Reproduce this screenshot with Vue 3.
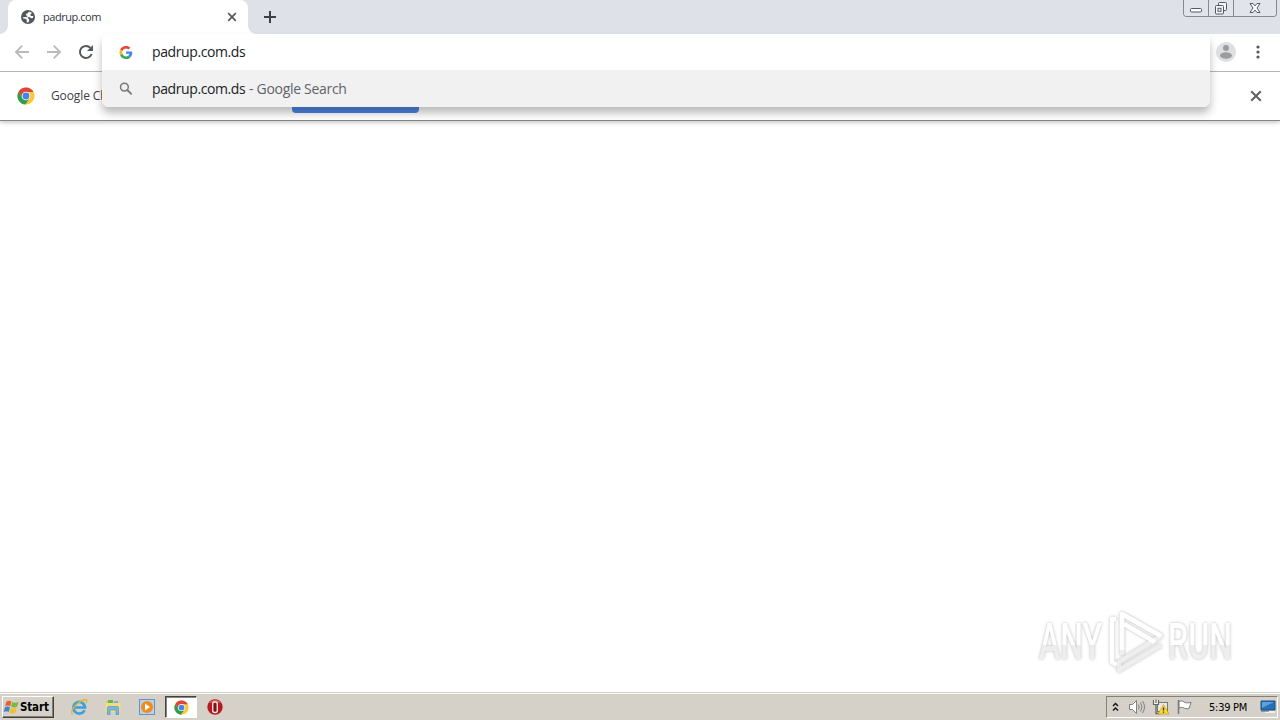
<template>
  <div class="desktop">
    <div class="browser">
      <div class="tab-strip">
        <div class="tab">
          <svg class="globe" viewBox="0 0 16 16" width="16" height="16">
            <circle cx="8" cy="8" r="7" fill="#54575b" />
            <path d="M7.600 2.700c2.300-.5 4.500.8 5.300 2.700l-2.100-.3-1.300 1.200.4 1.300-2.500.1-.9 1.100-1.900-.7-2 .2c-.3-2.800 1.600-4.800 3.700-5.400l-.2 1.300z" fill="#54575b" />
            <path d="M8.800 2.600l-.9 1.600-1.700.5-.2 1.500 1.600.7-.8 1.400-1.900-.3-2.200.4.600 1.100 2.100.2 1.400 1.100-.2 2.500 1.700.1 1-1.800-.5-1.700-1.300-.8.700-1.200 1.600.3 1.400 1.100 1.800-.4.300-2-2.100.1-1.100-1 1.200-1.500 1.100-.4z" fill="#fff" />
          </svg>
          <span class="tab-title">padrup.com</span>
          <svg class="tab-close" viewBox="0 0 10 10" width="10" height="10"><path d="M1.2 1.2l7.6 7.6M8.8 1.2L1.2 8.8" stroke="#55585c" stroke-width="1.7" /></svg>
        </div>
        <svg class="new-tab" viewBox="0 0 14 14" width="14" height="14"><path d="M7 1v12M1 7h12" stroke="#3c4043" stroke-width="2" /></svg>
        <div class="window-controls">
          <span class="wc wc-min"><svg viewBox="0 0 14 16" width="14" height="16"><rect x="1.5" y="8.5" width="11" height="3.5" rx="1" fill="#fff" stroke="#535764" /></svg></span>
          <span class="wc wc-max">
            <svg viewBox="0 0 14 16" width="14" height="16" fill="#f5f6f8" stroke="#535764">
              <rect x="4.5" y="2.5" width="8" height="8" rx="1" /><rect x="1.5" y="5.5" width="8" height="8.5" rx="1" /><rect x="4" y="8.3" width="3" height="3" />
            </svg>
          </span>
          <span class="wc wc-close">
            <svg viewBox="0 0 14 16" width="14" height="16"><path d="M2 3.5h3l2 2.4 2-2.4h3L9 8l3 4.5H9l-2-2.4-2 2.4H2L5 8z" fill="#fff" stroke="#535764" stroke-linejoin="round" /></svg>
          </span>
        </div>
      </div>

      <div class="toolbar">
        <svg class="nav" viewBox="0 0 16 16" width="16" height="16"><path d="M15 8H2M8.3 1.6L1.9 8l6.4 6.4" fill="none" stroke="#b9babc" stroke-width="1.8" /></svg>
        <svg class="nav" viewBox="0 0 16 16" width="16" height="16"><path d="M1 8h13M7.7 1.6L14.1 8l-6.4 6.4" fill="none" stroke="#b9babc" stroke-width="1.8" /></svg>
        <svg class="nav" viewBox="0 0 16 16" width="16" height="16"><path d="M13.6 10A6 6 0 1 1 12.4 3.9" fill="none" stroke="#55585c" stroke-width="2" /><path d="M15 1v6H9z" fill="#55585c" /></svg>
        <svg class="avatar" viewBox="0 0 20 20" width="20" height="20">
          <circle cx="10" cy="10" r="10" fill="#dedfe1" /><circle cx="10" cy="5.9" r="3" fill="#9a9ca0" /><ellipse cx="10" cy="13.5" rx="6" ry="3.2" fill="#9a9ca0" />
        </svg>
        <svg class="menu-dots" viewBox="0 0 4 16" width="4" height="16" fill="#55585c"><circle cx="2" cy="3" r="1.6" /><circle cx="2" cy="8" r="1.6" /><circle cx="2" cy="13" r="1.6" /></svg>
      </div>

      <div class="infobar">
        <svg viewBox="0 0 20 20" width="18" height="18"><use href="#chrome-logo" /></svg>
        <span class="info-text">Google Ch</span>
        <span class="info-button"></span>
        <svg class="info-close" viewBox="0 0 10 10" width="12" height="12"><path d="M1 1l8 8M9 1L1 9" stroke="#616468" stroke-width="1.7" /></svg>
      </div>

      <!-- address bar with suggestions -->
      <div class="omnibox">
        <div class="omni-row">
          <svg viewBox="0 0 48 48" width="13" height="13">
            <path fill="#ea4335" d="M24 9.5c3.5 0 6.7 1.2 9.2 3.6l6.9-6.9C35.9 2.4 30.5 0 24 0 14.6 0 6.5 5.4 2.6 13.2l8 6.2C12.4 13.7 17.7 9.5 24 9.5z" />
            <path fill="#4285f4" d="M47 24.5c0-1.6-.2-3.1-.4-4.5H24v9h12.9c-.6 3-2.2 5.500-4.700 7.200l7.700 6C44.400 38 47 31.800 47 24.500z" />
            <path fill="#fbbc05" d="M10.500 28.600a14.500 14.500 0 0 1 0-9.200l-8-6.200a24 24 0 0 0 0 21.600z" />
            <path fill="#34a853" d="M24 48c6.500 0 11.900-2.100 15.900-5.800l-7.700-6c-2.200 1.500-4.900 2.300-8.200 2.300-6.300 0-11.600-4.200-13.500-9.900l-8 6.200C6.500 42.600 14.600 48 24 48z" />
          </svg>
          <span class="omni-text">padrup.com.ds</span>
        </div>
        <div class="omni-row selected">
          <svg viewBox="0 0 14 14" width="14" height="14" fill="none" stroke="#77797c"><circle cx="5.4" cy="5.1" r="3.9" stroke-width="1.5" /><path d="M8.3 8l4.400 4.400" stroke-width="1.8" /></svg>
          <span class="omni-text">padrup.com.ds</span>
          <span class="omni-hint">- Google Search</span>
        </div>
      </div>
    </div>

    <div class="page">
      <svg class="watermark" viewBox="0 0 220 80" width="220" height="80">
        <defs>
          <linearGradient id="wm-fill" x1="0" y1="0" x2="0" y2="1">
            <stop offset=".55" stop-color="#fff" /><stop offset=".56" stop-color="#ededed" /><stop offset="1" stop-color="#f1f1f1" />
          </linearGradient>
        </defs>
        <g class="wm-shape">
          <text x="14" y="59" textLength="63" lengthAdjust="spacingAndGlyphs" fill="url(#wm-fill)">ANY</text>
          <text x="143" y="59" textLength="64" lengthAdjust="spacingAndGlyphs" fill="url(#wm-fill)">RUN</text>
          <g fill="none" stroke-width="4.5" stroke-linejoin="round">
            <path d="M91 19h-4v43l5 3" stroke="#fff" />
            <path d="M97 55V14l39 22-42 26v8l42-25" stroke="#eee" />
            <path d="M97 50V14l39 22M99 24l31 18" stroke="#fff" />
          </g>
        </g>
      </svg>
    </div>

    <div class="taskbar">
      <div class="start">
        <svg viewBox="0 0 17 16" width="17" height="16">
          <path d="M3.5 2.500c2-1.200 3.500-.9 5 0L7.200 7.300c-1.500-1-3.200-1-5 0z" fill="#e8622c" />
          <path d="M9.3 3c1.9 1.1 3.9 1 6.200 0l-1.400 4.800c-2 1.100-4 1-6.100 0z" fill="#7db73c" />
          <path d="M2 8.200c1.800-1.100 3.500-1 5 0l-1.300 4.900c-1.600-1-3.200-1-5.100 0z" fill="#3c86d1" />
          <path d="M7.800 8.800c2 1.100 4 1 6 0l-1.300 4.900c-2.200 1.100-4.100 1-6 0z" fill="#f4bd2d" />
        </svg>
        <span>Start</span>
      </div>
      <div class="launchers">
        <span class="launcher">
          <svg viewBox="0 0 18 18" width="18" height="18" fill="none">
            <path d="M14.5 12.2A5.800 5.800 0 1 1 15 9.500H5" stroke="#3ba0dc" stroke-width="2.7" />
            <path d="M2.5 16.500C-1.500 13 9 2.500 15.500 1.500c2-.2 1.600 2 .7 3.500" stroke="#e5b52f" stroke-width="1.3" />
          </svg>
        </span>
        <span class="launcher">
          <svg viewBox="0 0 18 18" width="18" height="18">
            <path d="M2 3h5l1 1.500h7.500V14H2z" fill="#e9c35b" /><path d="M4 2h5v3H4z" fill="#65b557" /><path d="M10 3h4v3h-4z" fill="#74afe0" />
            <path d="M1.500 5h15v9h-15z" fill="#f5dc83" /><path d="M3.500 16.500V10q0-1.500 1.500-1.500h8q1.500 0 1.500 1.500v6.500H12V12H6v4.500z" fill="#74bce2" stroke="#4389b5" stroke-width=".6" />
          </svg>
        </span>
        <span class="launcher">
          <svg viewBox="0 0 18 18" width="18" height="18"><rect x="1.5" y="1.5" width="15" height="15" fill="#b5d3ed" stroke="#6495c3" /><circle cx="9" cy="9" r="6" fill="#f28b1d" /><path d="M7 5.500l5 3.500-5 3.500z" fill="#fff" /></svg>
        </span>
        <span class="launcher active">
          <svg viewBox="0 0 20 20" width="15" height="15">
            <g id="chrome-logo">
              <circle cx="10" cy="10" r="9.5" fill="#fbc934" />
              <path d="M1.800 5.200A9.500 9.500 0 0 1 18.300 5.500H10L5.900 12.300z" fill="#de4437" />
              <path d="M1.800 5.200A9.500 9.500 0 0 0 9.200 19.500l4.800-7-8.100-.3z" fill="#2ba052" />
              <circle cx="10" cy="10" r="4.8" fill="#fff" /><circle cx="10" cy="10" r="3.8" fill="#4784e8" />
            </g>
          </svg>
        </span>
        <span class="launcher">
          <svg viewBox="0 0 18 18" width="18" height="18"><circle cx="9" cy="9" r="7.7" fill="#b71920" /><path d="M3 5a7.500 7.500 0 0 1 12 0c-3-1-8-1-12 0z" fill="#d76465" /><rect x="6.7" y="4" width="4.6" height="10.500" rx="2" fill="#8c0c12" stroke="#f4e5e5" stroke-width="1.4" /></svg>
        </span>
      </div>
      <div class="tray">
        <svg class="chevrons" viewBox="0 0 7 10" width="7" height="10"><path d="M1 4l2.500-2.500L6 4M1 8.500L3.500 6 6 8.500" fill="none" stroke="#111" stroke-width="1.4" /></svg>
        <svg viewBox="0 0 18 16" width="18" height="16" fill="none" stroke="#808080"><path d="M1.500 5.500h3l4-4v13l-4-4h-3z" fill="#fff" /><path d="M10.500 5.500q1.500 2.500 0 5M12.500 3.500q3 4.500 0 9M14.500 2q4 6 0 12" /></svg>
        <svg class="network" viewBox="0 0 18 16" width="18" height="16">
          <rect x="5.5" y="3.5" width="10" height="9" fill="#e9e9e9" stroke="#77796d" /><path d="M1.500 1v4.500h5V1M4 .5V4" fill="#f4f4f0" stroke="#66685e" stroke-width="1.2" /><path d="M4 6v8.500h4" fill="none" stroke="#66685e" stroke-width="1.3" /><path d="M11.500 5.500L17 15H6z" fill="#f8dc37" stroke="#c59b16" stroke-width=".7" /><path d="M11.500 8.500v3M11.500 12.500v1.200" stroke="#3b3000" stroke-width="1.3" />
        </svg>
        <svg class="flag" viewBox="0 0 17 16" width="17" height="16"><path d="M2.500 1v14" stroke="#777" stroke-width="1.5" /><path d="M3 2.500c3-1.500 4.500 0 6 1 2 .6 3.500.2 6 0l-2 6c-2.500.8-4 0-5.500-.8-1.500-.5-3-.2-4.500.3z" fill="#fff" stroke="#777" /></svg>
        <span class="clock">{{ time }}</span>
        <svg viewBox="0 0 16 14" width="16" height="14"><path d="M1 1h14v9H1z" fill="#2770b6" stroke="#1c4c85" /><path d="M2 2h12L2 8z" fill="#5ba2dd" /><path d="M5 12h10" stroke="#f7fafc" stroke-width="1.5" /><path d="M1 11h8" stroke="#355f91" /></svg>
      </div>
    </div>
  </div>
</template>

<script setup>
import { ref } from 'vue'

const time = ref('5:39 PM')
</script>

<style>
body { margin: 0; overflow: hidden; }
</style>

<style scoped>
.desktop { width: 1280px; height: 720px; display: flex; flex-direction: column; background: #fff; font-family: 'Open Sans', 'Noto Sans', sans-serif; overflow: hidden; }
svg { display: block; flex-shrink: 0; }
.browser { position: relative; z-index: 1; height: 121px; box-shadow: 0 2px 4px rgba(0,0,0,0.2); }
.tab-strip { height: 34px; display: flex; align-items: flex-start; background: #dee1e8; box-sizing: border-box; padding-left: 8px; }
.tab { position: relative; width: 240px; height: 34px; box-sizing: border-box; padding: 0 11px 0 12px; display: flex; align-items: center; background: #fff; border-radius: 8px 8px 0 0; }
.tab::before, .tab::after { content: ''; position: absolute; bottom: 0; width: 8px; height: 8px; }
.tab::before { left: -8px; background: radial-gradient(circle at 0 0, transparent 7.5px, #fff 8px); }
.tab::after { right: -8px; background: radial-gradient(circle at 100% 0, transparent 7.5px, #fff 8px); }
.tab-title { flex: 1; margin-left: 7px; font-size: 11px; line-height: 16px; letter-spacing: -0.45px; color: #333639; }
.new-tab { margin: 10px 0 0 15px; }
.window-controls { display: flex; height: 17px; box-sizing: border-box; margin: 0 3px 0 auto; border: 1px solid #858994; border-top: 0; border-radius: 0 0 4px 4px; overflow: hidden; }
.wc { display: flex; justify-content: center; width: 24px; border-right: 1px solid #858994; background: #e1e4ea; }
.wc-max { width: 24px; }
.wc-close { width: 42px; border-right: 0; }
.toolbar { height: 38px; box-sizing: border-box; display: flex; align-items: center; padding: 0 20px 2px 14px; background: #fff; border-bottom: 1px solid #b4b5b7; }
.nav { margin-right: 16px; }
.avatar { margin-left: auto; }
.menu-dots { margin-left: 20px; }
.infobar { height: 49px; box-sizing: border-box; display: flex; align-items: center; padding: 0 18px 0 17px; background: #fff; border-bottom: 1px solid #858585; }
.info-text { width: 225px; margin-left: 16px; padding-bottom: 1px; font-size: 12px; letter-spacing: -0.1px; color: #3c4043; white-space: nowrap; }
.info-button { width: 127px; height: 34px; margin-left: 16px; border-radius: 4px; background: #4e86e4; }
.info-close { margin-left: auto; }
.omnibox { position: absolute; left: 102px; top: 34px; width: 1108px; height: 73px; border-radius: 7px; overflow: hidden; background: #fff; box-shadow: 0 6px 9px rgba(0,0,0,0.27); }
.omni-row { display: flex; align-items: center; height: 36px; box-sizing: border-box; padding-left: 17px; font-size: 14px; line-height: 20px; white-space: nowrap; }
.omni-row svg { width: 14px; }
.omni-row.selected { height: 37px; background: #f1f1f1; }
.omni-text { width: 93px; margin-left: 19px; color: #202124; letter-spacing: -0.4px; }
.omni-hint { margin-left: 4px; color: #606368; letter-spacing: -0.3px; }
.page { position: relative; flex: 1; background: #fff; }
.watermark { position: absolute; left: 1025px; top: 479px; overflow: visible; }
.wm-shape { filter: drop-shadow(0 0 1.5px rgba(0,0,0,0.28)); font-family: Roboto, 'Liberation Sans', sans-serif; font-size: 50px; font-weight: 500; }
.taskbar { height: 28px; box-sizing: border-box; display: flex; align-items: center; padding: 1px 2px 0; background: #d5d1c8; border-top: 1px solid #d5d1c8; box-shadow: inset 0 1px #fff; }
.start { width: 52px; height: 22px; box-sizing: border-box; display: flex; align-items: center; padding-left: 0; border: 1px solid; border-color: #fff #404040 #404040 #fff; box-shadow: inset -1px -1px #858178; font-family: 'DejaVu Sans Condensed', sans-serif; font-size: 11.5px; font-weight: 700; letter-spacing: -0.15px; color: #000; }
.launchers { display: flex; align-items: center; gap: 2px; margin-left: 9px; }
.launcher { width: 32px; height: 22px; display: flex; align-items: center; justify-content: center; box-sizing: border-box; }
.launcher.active { background: #fff; border: 1px solid; border-color: #45433f #fff #fff #45433f; box-shadow: inset 1px 1px #88857e; }
.tray { display: flex; align-items: center; width: 172px; height: 22px; box-sizing: border-box; margin-left: auto; padding-left: 5px; border: 1px solid; border-color: #858178 #fff #fff #858178; }
.chevrons { margin-right: 9px; }
.network { margin-left: 6px; }
.flag { margin-left: 6px; }
.clock { width: 41px; margin: 0 10px 0 16px; font-family: 'DejaVu Sans Condensed', sans-serif; font-size: 11px; letter-spacing: -0.25px; color: #000; white-space: nowrap; }
</style>
